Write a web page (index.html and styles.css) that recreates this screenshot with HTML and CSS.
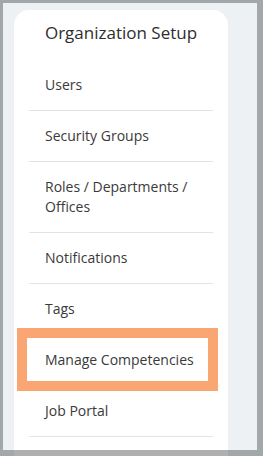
FILE: index.html
```html
<!DOCTYPE html>
<html lang="en">
<head>
<meta charset="utf-8">
<title>Organization Setup</title>
<link rel="stylesheet" href="styles.css">
</head>
<body>
<div class="page">
  <nav class="card">
    <h2 class="title">Organization Setup</h2>
    <ul class="menu">
      <li class="item">Users</li>
      <li class="item">Security Groups</li>
      <li class="item">Roles / Departments / Offices</li>
      <li class="item">Notifications</li>
      <li class="item">Tags</li>
      <li class="item highlighted">Manage Competencies</li>
      <li class="item">Job Portal</li>
    </ul>
  </nav>
</div>
<div class="frame"></div>
</body>
</html>
```
FILE: styles.css
```css
html, body {
  margin: 0;
  padding: 0;
  height: 100%;
  overflow: hidden;
}
body {
  background: #edf1f4;
  font-family: "Open Sans", "Liberation Sans", sans-serif;
  color: #3a3a3a;
}
.page {
  height: 100%;
  box-sizing: border-box;
  padding: 10px 0 0 14px;
}
.card {
  width: 214px;
  height: 100%;
  background: #ffffff;
  border-radius: 15px 15px 0 0;
  padding-top: 11px;
  box-sizing: border-box;
}
.title {
  margin: 0 0 15px;
  font-size: 17px;
  font-weight: 400;
  line-height: 24px;
  text-align: center;
  color: #2e2e2e;
}
.menu {
  list-style: none;
  margin: 0 15px;
  padding: 0;
}
.item {
  position: relative;
  padding: 15px 8px 15px 16px;
  font-size: 14px;
  line-height: 20px;
  border-bottom: 1px solid #e2e2e2;
}
.highlighted::after {
  content: "";
  position: absolute;
  left: -12px;
  right: -5px;
  top: -7px;
  bottom: -6px;
  border: 10px solid #f9a673;
}
.frame {
  position: fixed;
  inset: 0;
  border-style: solid;
  border-width: 3px 6px 6px 3px;
  border-color: rgba(60, 64, 67, 0.42);
  pointer-events: none;
}
```
